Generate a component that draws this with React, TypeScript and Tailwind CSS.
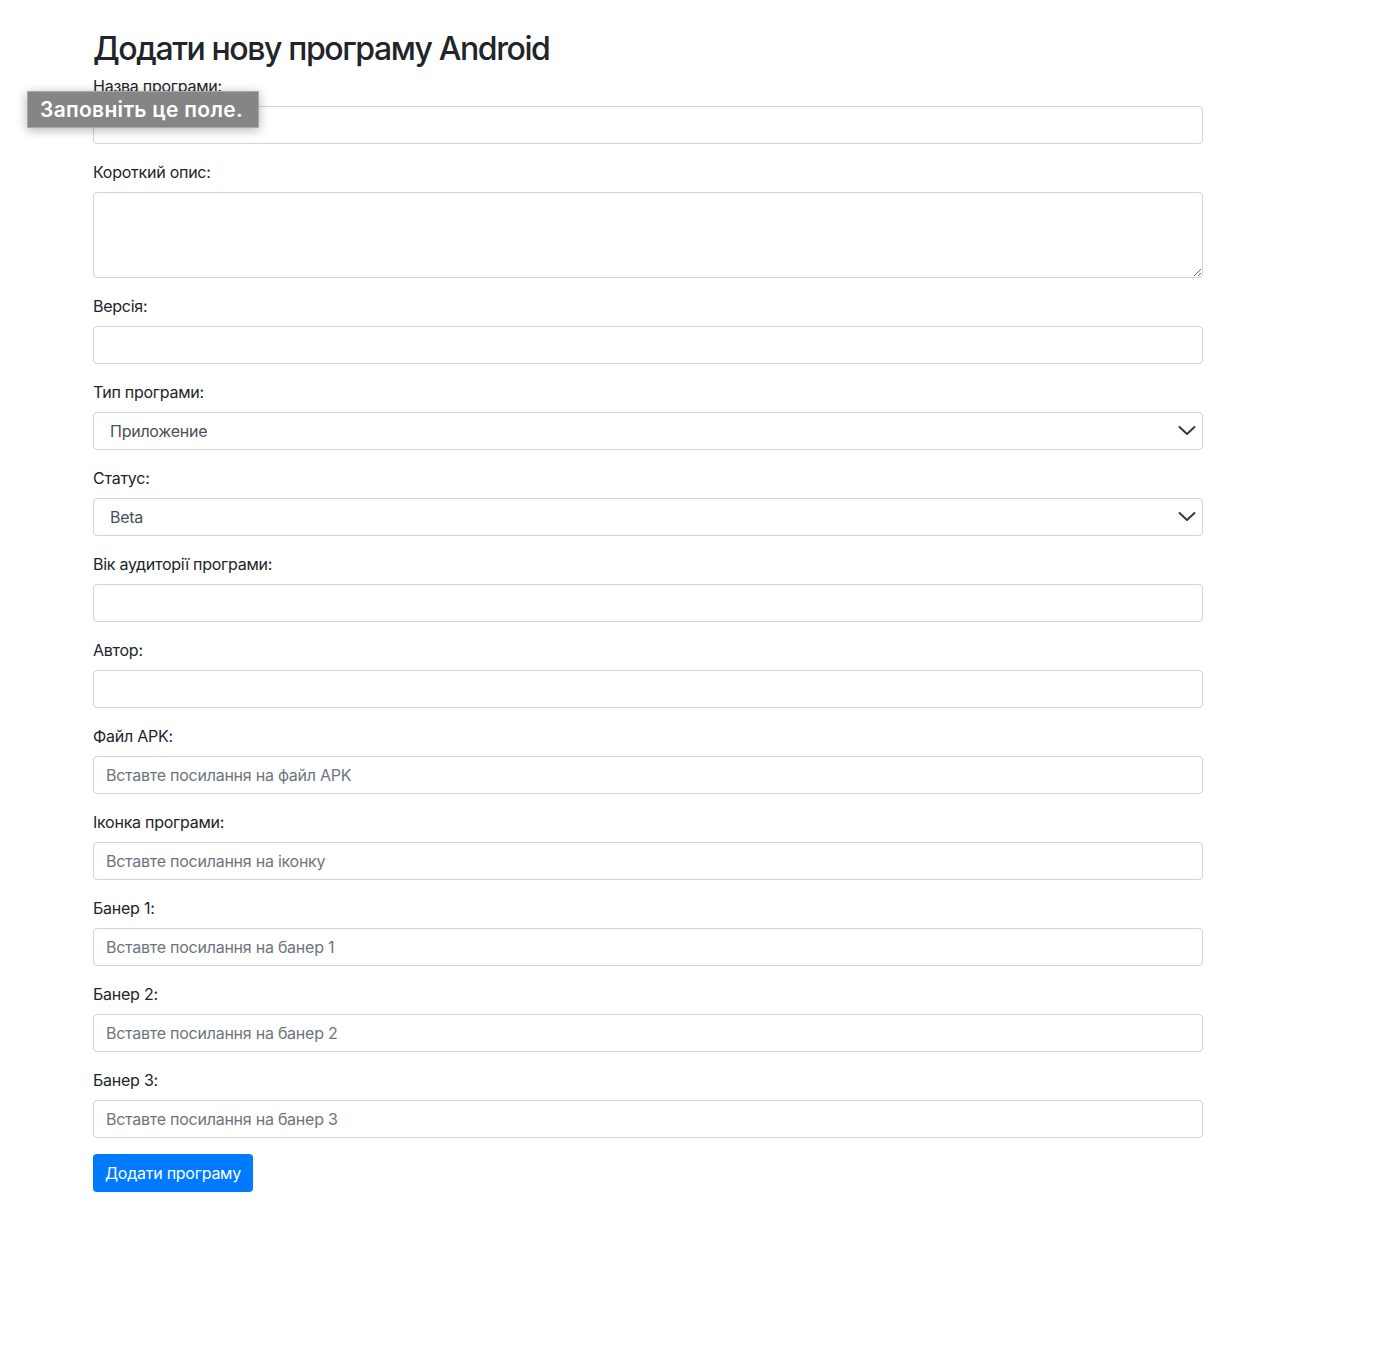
import React from 'react';

const inputCls =
  'block w-full h-[38px] px-3 rounded-[4px] border border-[#ced4da] bg-white text-base tracking-[-0.25px] text-[#495057] placeholder:text-[#6c757d] outline-none';

const Label = ({ children }: { children: React.ReactNode }) => (
  <label className="block mb-2 text-base leading-6 tracking-[-0.25px] text-[#212529]">{children}</label>
);

const Field = ({ label, placeholder }: { label: string; placeholder?: string }) => (
  <div className="mb-4">
    <Label>{label}</Label>
    <input type="text" placeholder={placeholder} className={inputCls} />
  </div>
);

const SelectField = ({ label, options }: { label: string; options: string[] }) => (
  <div className="mb-4">
    <Label>{label}</Label>
    <div className="relative">
      <select className={`${inputCls} appearance-none pl-4`}>
        {options.map((o) => (
          <option key={o}>{o}</option>
        ))}
      </select>
      <svg
        className="absolute right-[6px] top-[12px] pointer-events-none"
        width="20"
        height="14"
        viewBox="0 0 20 14"
        fill="none"
      >
        <polyline points="2.5,3 10,10 17.5,3" stroke="#343a40" strokeWidth="2" strokeLinecap="round" strokeLinejoin="round" />
      </svg>
    </div>
  </div>
);

export default function App() {
  return (
    <div className="min-h-[1352px] bg-white font-['Inter',sans-serif]">
      <div className="relative w-[1110px] ml-[93px] pt-[30px]">
        <h2 className="text-[32px] leading-[38px] font-medium text-[#212529] mb-[6px] tracking-[-1.4px]">
          Додати нову програму Android
        </h2>
        <form>
          <Field label="Назва програми:" />
          <div className="mb-4">
            <Label>Короткий опис:</Label>
            <textarea rows={3} className="block w-full h-[86px] px-3 py-1.5 rounded-[4px] border border-[#ced4da] bg-white text-base text-[#495057] outline-none" />
          </div>
          <Field label="Версія:" />
          <SelectField label="Тип програми:" options={['Приложение', 'Игра']} />
          <SelectField label="Статус:" options={['Beta', 'Release']} />
          <Field label="Вік аудиторії програми:" />
          <Field label="Автор:" />
          <Field label="Файл APK:" placeholder="Вставте посилання на файл APK" />
          <Field label="Іконка програми:" placeholder="Вставте посилання на іконку" />
          <Field label="Банер 1:" placeholder="Вставте посилання на банер 1" />
          <Field label="Банер 2:" placeholder="Вставте посилання на банер 2" />
          <Field label="Банер 3:" placeholder="Вставте посилання на банер 3" />
          <button
            type="button"
            className="h-[38px] px-3 rounded-[4px] bg-[#007bff] text-white text-base tracking-[-0.25px]"
          >
            Додати програму
          </button>
        </form>

        {/* validation tooltip */}
        <div className="absolute left-[-66px] top-[91px] w-[232px] h-[37px] flex items-center px-3 bg-[#858585] border border-[#a8a8a8] shadow-[0_2px_10px_rgba(0,0,0,0.3)]">
          <span className="text-white text-[21px] font-semibold whitespace-nowrap tracking-[0.3px]">Заповніть це поле.</span>
        </div>
      </div>
    </div>
  );
}
